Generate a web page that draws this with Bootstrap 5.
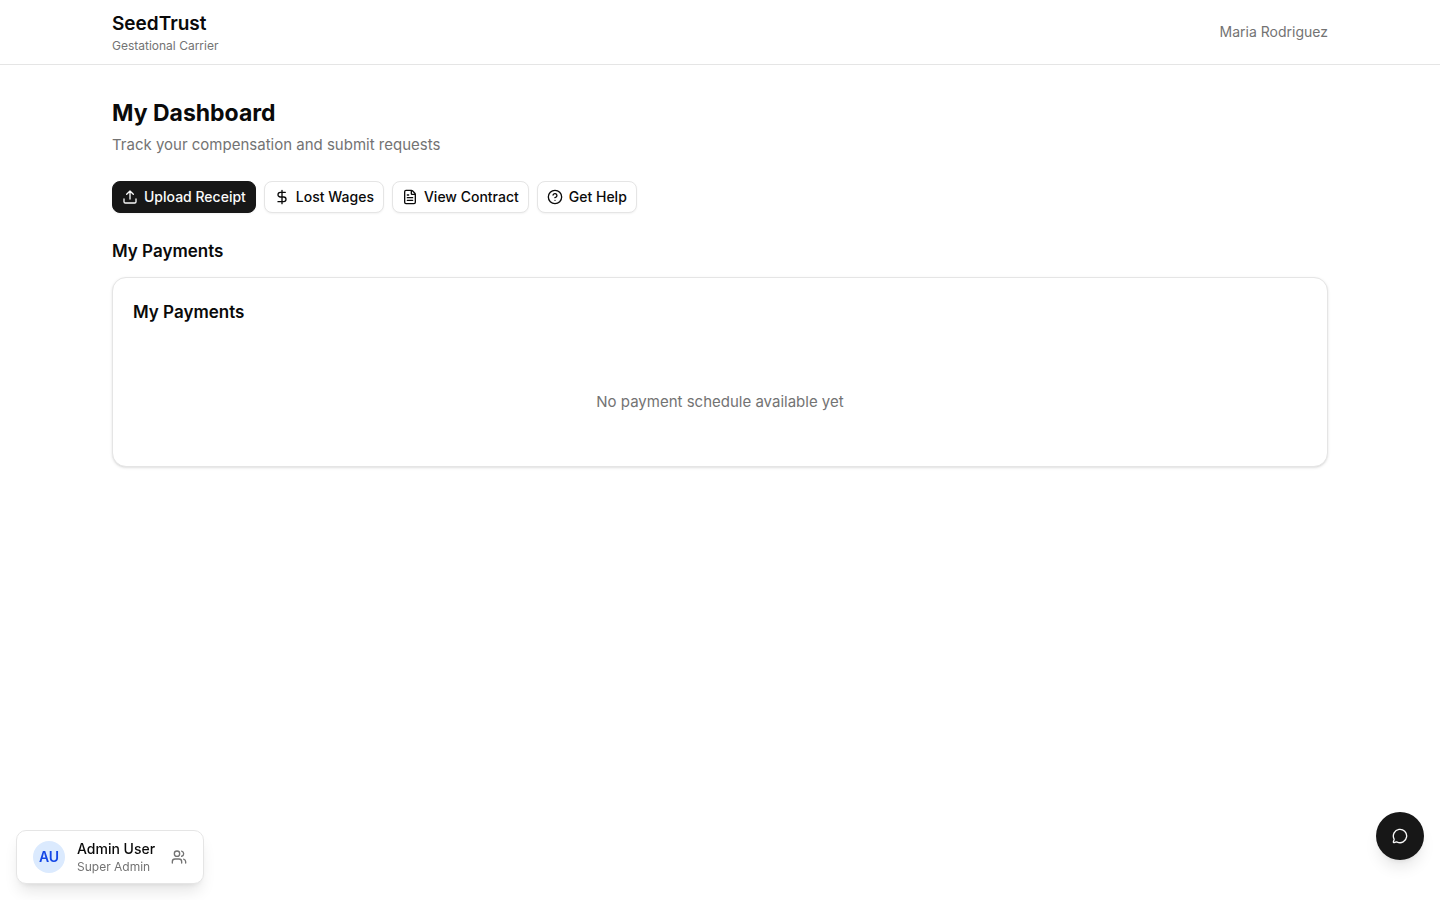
<!DOCTYPE html>
<html lang="en">
<head>
<meta charset="utf-8">
<meta name="viewport" content="width=device-width, initial-scale=1">
<title>SeedTrust</title>
<link href="https://cdn.jsdelivr.net/npm/bootstrap@5.3.0/dist/css/bootstrap.min.css" rel="stylesheet">
<style>
  :root { --ink: #0a0a0a; --muted-ink: #737373; --line: #e5e5e5; --solid: #171717; }
  body { font-family: Inter, "Liberation Sans", sans-serif; font-size: 15px; color: var(--ink); line-height: 24px; }
  svg { fill: none; stroke: currentColor; stroke-width: 2; stroke-linecap: round; stroke-linejoin: round; flex-shrink: 0; }
  .page-wrap { max-width: 1280px; padding-left: 32px; padding-right: 32px; }
  .site-head { border-bottom: 1px solid var(--line); }
  .head-row { padding-top: 10px; padding-bottom: 10px; }
  .brand { font-size: 19px; line-height: 28px; }
  .quiet { color: var(--muted-ink); }
  .text-12 { font-size: 12px; line-height: 16px; }
  .text-14 { font-size: 14px; line-height: 20px; }
  .page-title { font-size: 23px; line-height: 32px; }
  .section-title { font-size: 17px; line-height: 28px; }
  .medium { font-weight: 500; }
  .btn-action { --bs-btn-padding-x: 9px; --bs-btn-padding-y: 5px; --bs-btn-font-size: 14px; --bs-btn-line-height: 20px;
    --bs-btn-font-weight: 500; --bs-btn-border-radius: 8px; --bs-btn-color: var(--ink); --bs-btn-bg: #fff; --bs-btn-border-color: var(--line);
    --bs-btn-hover-bg: #f5f5f5; --bs-btn-hover-border-color: var(--line); gap: 6px; box-shadow: 0 1px 2px rgba(0,0,0,.05); }
  .btn-solid { --bs-btn-color: #fafafa; --bs-btn-bg: var(--solid); --bs-btn-border-color: var(--solid);
    --bs-btn-hover-color: #fafafa; --bs-btn-hover-bg: #303030; }
  .pay-card { --bs-card-border-color: var(--line); --bs-card-border-radius: 14px; --bs-card-spacer-x: 20px; --bs-card-spacer-y: 20px;
    box-shadow: 0 1px 3px rgba(0,0,0,.1), 0 1px 2px -1px rgba(0,0,0,.1); }
  .empty-note { padding: 32px 0; margin: 32px 0 0; }
  .user-chip { background: #fff; color: var(--ink); border: 1px solid var(--line); border-radius: 10px; padding: 8px 16px;
    box-shadow: 0 10px 15px -3px rgba(0,0,0,.1), 0 4px 6px -4px rgba(0,0,0,.1); }
  .avatar { width: 32px; height: 32px; background: #dbeafe; color: #1447e6; font-weight: 600; }
  .chat { width: 48px; height: 48px; background: var(--solid); color: #fafafa; box-shadow: 0 10px 15px -3px rgba(0,0,0,.1), 0 4px 6px -4px rgba(0,0,0,.1); }
  .chat-dock { bottom: 40px; right: 16px; }
</style>
</head>
<body>
<header class="site-head">
  <div class="page-wrap head-row mx-auto d-flex justify-content-between align-items-center">
    <div>
      <div class="brand fw-semibold">SeedTrust</div>
      <div class="text-12 quiet">Gestational Carrier</div>
    </div>
    <span class="text-14 quiet">Maria Rodriguez</span>
  </div>
</header>
<main class="page-wrap mx-auto py-4">
  <div class="pt-2 mb-4">
    <h1 class="page-title fw-bold mb-1">My Dashboard</h1>
    <p class="quiet mb-0">Track your compensation and submit requests</p>
  </div>
  <div class="d-flex flex-wrap gap-2 mb-4">
    <button type="button" class="btn btn-action btn-solid d-flex align-items-center"><svg width="16" height="16" viewBox="0 0 24 24" aria-hidden="true"><path d="M12 3v12M17 8l-5-5-5 5M21 15v4a2 2 0 0 1-2 2H5a2 2 0 0 1-2-2v-4"/></svg>Upload Receipt</button>
    <button type="button" class="btn btn-action d-flex align-items-center"><svg width="16" height="16" viewBox="0 0 24 24" aria-hidden="true"><path d="M12 2v20M17 5H9.500a3.500 3.500 0 0 0 0 7h5a3.500 3.500 0 0 1 0 7H6"/></svg>Lost Wages</button>
    <button type="button" class="btn btn-action d-flex align-items-center"><svg width="16" height="16" viewBox="0 0 24 24" aria-hidden="true"><path d="M6 22a2 2 0 0 1-2-2V4a2 2 0 0 1 2-2h8a2.400 2.400 0 0 1 1.704.706l3.588 3.588A2.400 2.400 0 0 1 20 8v12a2 2 0 0 1-2 2zM14 2v5a1 1 0 0 0 1 1h5M10 9H8M16 13H8M16 17H8"/></svg>View Contract</button>
    <button type="button" class="btn btn-action d-flex align-items-center"><svg width="16" height="16" viewBox="0 0 24 24" aria-hidden="true"><circle cx="12" cy="12" r="10"/><path d="M9.090 9a3 3 0 0 1 5.830 1c0 2-3 3-3 3M12 17h.01"/></svg>Get Help</button>
  </div>
  <h2 class="section-title fw-semibold mb-2 pb-1">My Payments</h2>
  <section class="card pay-card">
    <div class="card-body">
      <h3 class="section-title fw-semibold mb-0">My Payments</h3>
      <p class="quiet text-center empty-note">No payment schedule available yet</p>
    </div>
  </section>
</main>
<button type="button" class="user-chip position-fixed bottom-0 start-0 m-3 d-flex align-items-center text-start">
  <span class="avatar rounded-circle d-flex align-items-center justify-content-center text-14 me-2">AU</span>
  <span class="ms-1 me-3"><span class="d-block text-14 medium">Admin User</span><span class="d-block text-12 quiet">Super Admin</span></span>
  <svg class="quiet" width="16" height="16" viewBox="0 0 24 24" aria-hidden="true"><path d="M16 21v-2a4 4 0 0 0-4-4H6a4 4 0 0 0-4 4v2M16 3.128a4 4 0 0 1 0 7.744M22 21v-2a4 4 0 0 0-3-3.870"/><circle cx="9" cy="7" r="4"/></svg>
</button>
<button type="button" class="chat chat-dock position-fixed border-0 rounded-circle p-0 d-flex align-items-center justify-content-center" aria-label="Open chat"><svg width="16" height="16" viewBox="0 0 24 24" aria-hidden="true"><path d="M2.992 16.342a2 2 0 0 1 .094 1.167l-1.065 3.290a1 1 0 0 0 1.236 1.168l3.413-.998a2 2 0 0 1 1.099.092 10 10 0 1 0-4.777-4.719"/></svg></button>
<script src="https://cdn.jsdelivr.net/npm/bootstrap@5.3.0/dist/js/bootstrap.bundle.min.js"></script>
</body>
</html>
